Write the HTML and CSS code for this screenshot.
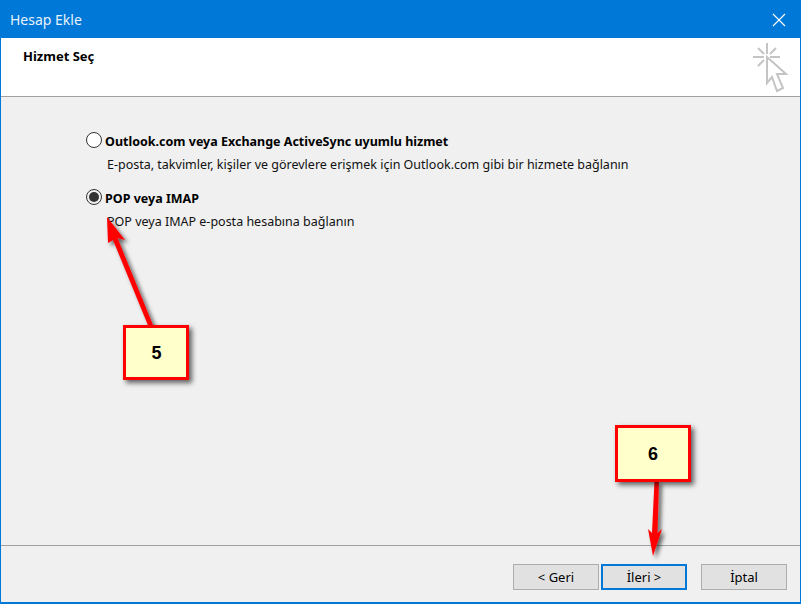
FILE: index.html
```html
<!DOCTYPE html>
<html lang="tr">
<head>
<meta charset="utf-8">
<title>Hesap Ekle</title>
<link rel="stylesheet" href="styles.css">
</head>
<body>
<div class="window">
  <div class="titlebar">
    <span class="title">Hesap Ekle</span>
    <svg class="close" width="14" height="14" viewBox="0 0 14 14"><path d="M1 1L13 13M13 1L1 13" stroke="#fff" stroke-width="1.1" fill="none"/></svg>
  </div>
  <div class="header">
    <h1 class="heading">Hizmet Seç</h1>
    <svg class="wizard" width="36" height="56" viewBox="0 0 36 56">
      <g stroke="#c4c4c4" stroke-width="2" fill="none">
        <path d="M14 0V11M0 14H11M17 14H27M5 5L11 11M23 5L17 11M5 23L11 17"/>
        <path d="M14 14V40L19 34L24 48L30 45L24 31L33 31Z" fill="#fff"/>
      </g>
    </svg>
  </div>
  <div class="content">
    <div class="option">
      <div class="option-row"><span class="radio"></span><span class="option-title">Outlook.com veya Exchange ActiveSync uyumlu hizmet</span></div>
      <p class="option-desc">E-posta, takvimler, kişiler ve görevlere erişmek için Outlook.com gibi bir hizmete bağlanın</p>
    </div>
    <div class="option">
      <div class="option-row"><span class="radio checked"></span><span class="option-title">POP veya IMAP</span></div>
      <p class="option-desc">POP veya IMAP e-posta hesabına bağlanın</p>
    </div>
  </div>
  <div class="footer">
    <button class="btn">&lt; Geri</button>
    <button class="btn primary">İleri &gt;</button>
    <button class="btn cancel">İptal</button>
  </div>
</div>

<svg class="arrows" width="801" height="604" viewBox="0 0 801 604">
  <defs>
    <filter id="sh" x="-40%" y="-20%" width="200%" height="140%">
      <feDropShadow dx="3" dy="3" stdDeviation="2" flood-color="#000" flood-opacity="0.6"/>
    </filter>
  </defs>
  <g filter="url(#sh)" fill="#ff0000" stroke="none">
    <path d="M107 217L125 240L117.500 238L153 325L148.500 326.500L113 240L108 243Z"/>
    <path d="M653 556L648 529L652 533L654.500 481L659 481L657.500 533L662 529Z"/>
  </g>
</svg>
<div class="callout one">5</div>
<div class="callout two">6</div>
</body>
</html>
```
FILE: styles.css
```css
* { box-sizing: border-box; }
html, body { margin: 0; padding: 0; }
body {
  width: 801px;
  height: 604px;
  overflow: hidden;
  position: relative;
  font-family: "Noto Sans", "Open Sans", sans-serif;
  font-size: 12.5px;
  color: #000;
}
.window {
  width: 801px;
  height: 604px;
  display: flex;
  flex-direction: column;
  background: #f0f0f0;
  border: 1px solid #0078d7;
  border-bottom-width: 2px;
}
.titlebar {
  height: 37px;
  flex: none;
  background: #0078d7;
  display: flex;
  align-items: center;
  justify-content: space-between;
  padding: 0 14px 0 9px;
  color: #fff;
}
.title { font-size: 14px; color: #e8f2fb; }
.close { display: block; }
.header {
  height: 59px;
  flex: none;
  background: #fff;
  border-bottom: 1px solid #a0a0a0;
  display: flex;
  justify-content: space-between;
  padding: 9px 11px 0 22px;
}
.heading { margin: 0; font-size: 13px; line-height: 18px; font-weight: 700; }
.wizard { display: block; margin-top: -4px; }
.content {
  flex: 1;
  padding: 34px 0 0 85px;
  display: flex;
  flex-direction: column;
  gap: 15px;
}
.option-row { display: flex; align-items: center; gap: 3px; height: 18px; }
.radio {
  width: 16px;
  height: 16px;
  border-radius: 50%;
  border: 1px solid #333;
  background: #fff;
  flex: none;
  position: relative;
}
.radio.checked { background: #f0f0f0; }
.radio.checked::after {
  content: "";
  position: absolute;
  left: 2px;
  top: 2px;
  width: 10px;
  height: 10px;
  border-radius: 50%;
  background: #333;
}
.option-title { font-weight: 700; line-height: 18px; padding-top: 4px; }
.option-desc { margin: 7px 0 0 21px; line-height: 17px; color: #111; }
.footer {
  height: 57px;
  flex: none;
  border-top: 1px solid #a0a0a0;
  display: flex;
  justify-content: flex-end;
  align-items: flex-start;
  gap: 2px;
  padding: 18px 13px 0 0;
}
.btn {
  width: 86px;
  height: 26px;
  padding: 0;
  background: #e1e1e1;
  border: 1px solid #adadad;
  font: inherit;
  font-size: 13px;
  color: #000;
}
.btn.primary { border: 2px solid #0078d7; }
.btn.cancel { margin-left: 12px; }
.arrows { position: absolute; left: 0; top: 0; pointer-events: none; }
.callout {
  position: absolute;
  background: #ffffcc;
  border: 3px solid #ff0000;
  box-shadow: 3px 3px 5px rgba(0, 0, 0, 0.6);
  display: flex;
  align-items: center;
  justify-content: center;
  font-family: "Liberation Sans", Arial, sans-serif;
  font-size: 18px;
  font-weight: 700;
}
.callout.one { left: 123px; top: 325px; width: 66px; height: 55px; padding: 2px 0 0 1px; }
.callout.two { left: 615px; top: 425px; width: 76px; height: 57px; padding-top: 1px; }
```
